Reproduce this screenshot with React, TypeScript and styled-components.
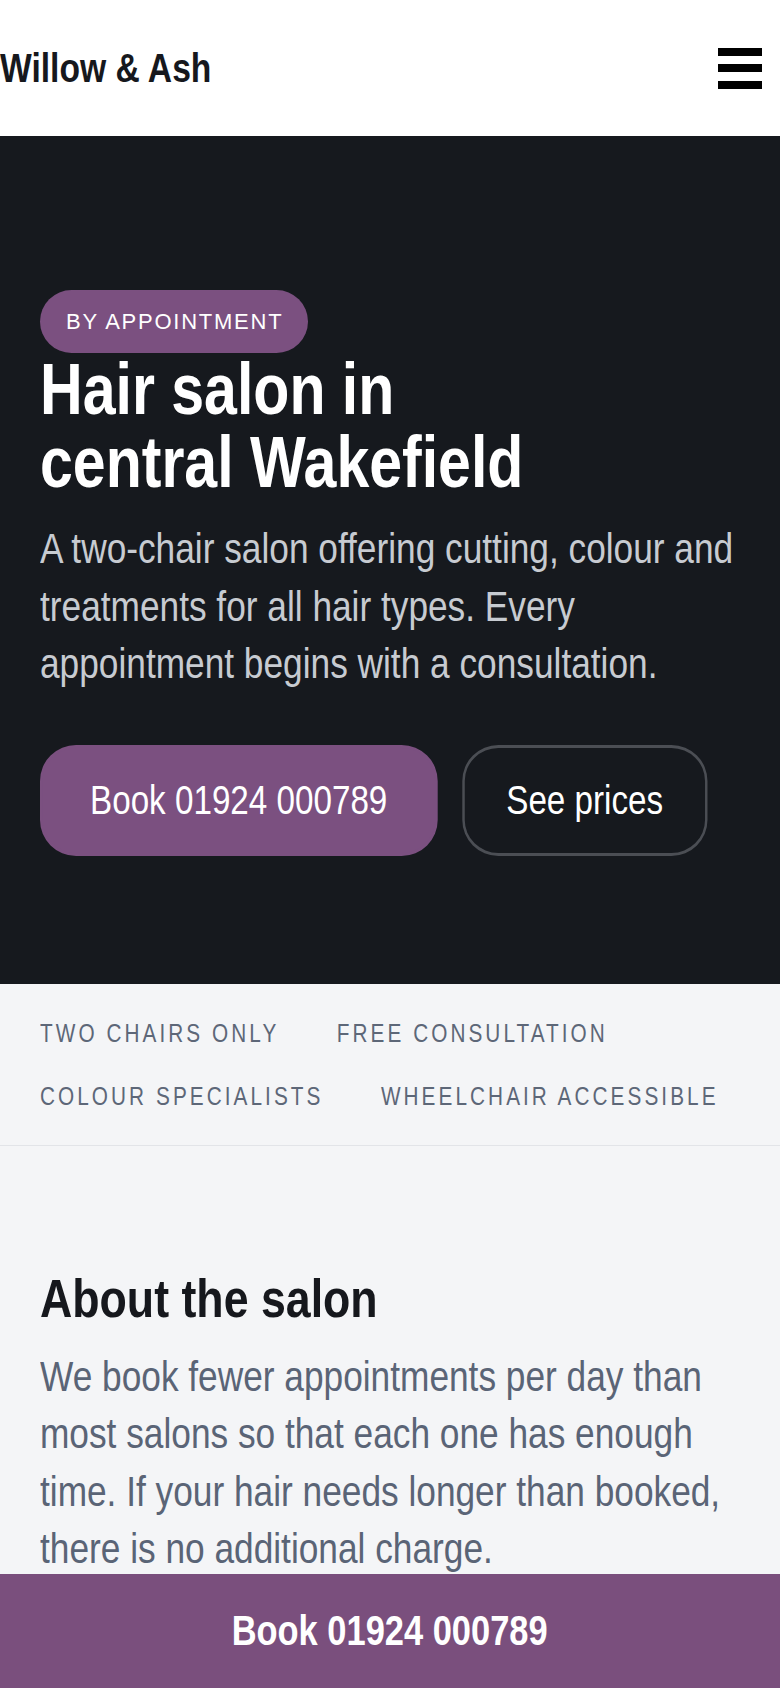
import styled, { createGlobalStyle, css } from "styled-components";

// The reference type is a condensed Arial-style face; we squeeze Liberation Sans
// horizontally and lay the text blocks out in the unsqueezed width.
const SQUEEZE = 0.82;

const condensed = css`
  width: calc(100% / ${SQUEEZE});
  transform: scaleX(${SQUEEZE});
  transform-origin: left top;
`;

const GlobalStyle = createGlobalStyle`
  * { box-sizing: border-box; }
  html, body { margin: 0; padding: 0; }
  body {
    font-family: "Liberation Sans", Arial, sans-serif;
    background: #f4f5f7;
    color: #16181d;
    overflow-x: hidden;
  }
`;

const Page = styled.div`
  min-height: 1688px;
  padding-bottom: 114px;
`;

const Header = styled.header`
  height: 136px;
  background: #ffffff;
  display: flex;
  align-items: center;
  justify-content: space-between;
  padding: 0 18px 0 0;
`;

const Logo = styled.a`
  display: inline-block;
  font-size: 41px;
  font-weight: 700;
  color: #16181d;
  text-decoration: none;
  transform: scaleX(${SQUEEZE});
  transform-origin: left center;
`;

const MenuButton = styled.button`
  width: 44px;
  height: 41px;
  padding: 0;
  border: 0;
  background: transparent;
  display: flex;
  flex-direction: column;
  justify-content: space-between;
  cursor: pointer;
`;

const MenuBar = styled.span`
  display: block;
  height: 8px;
  background: #000000;
`;

const Hero = styled.section`
  background: #16191e;
  padding: 154px 40px 128px;
`;

const HeroInner = styled.div`
  ${condensed}
`;

const Badge = styled.span`
  display: inline-block;
  background: #7b5080;
  color: #ffffff;
  font-size: 22px;
  line-height: 29px;
  letter-spacing: 0.08em;
  padding: 17px 25px 17px 26px;
  border-radius: 999px;
`;

const Title = styled.h1`
  margin: 0;
  font-size: 72px;
  line-height: 73px;
  font-weight: 700;
  color: #ffffff;
`;

const Lead = styled.p`
  margin: 21px 0 0;
  font-size: 43px;
  line-height: 57.5px;
  color: #c7cbd1;
`;

const Actions = styled.div`
  display: flex;
  gap: 30px;
  margin-top: 52px;
`;

const Button = styled.a<{ $variant?: "primary" | "outline" }>`
  display: inline-flex;
  align-items: center;
  justify-content: center;
  height: 111px;
  padding: 0 ${(p) => (p.$variant === "outline" ? "51px" : "58px")};
  border-radius: 44px / 36px;
  font-size: 40.5px;
  color: #ffffff;
  text-decoration: none;
  background: ${(p) => (p.$variant === "outline" ? "transparent" : "#7b5080")};
  border: 3px solid ${(p) => (p.$variant === "outline" ? "#4b4e54" : "#7b5080")};
`;

const FeaturesBand = styled.section`
  padding: 30px 40px;
  border-bottom: 1px solid #e2e4e8;
`;

const FeatureList = styled.ul`
  ${condensed}
  list-style: none;
  margin: 0;
  padding: 0;
  display: flex;
  flex-wrap: wrap;
  column-gap: 70px;
  row-gap: 25px;
`;

const Feature = styled.li`
  font-size: 25.3px;
  line-height: 38px;
  letter-spacing: 0.148em;
  text-transform: uppercase;
  color: #5d6778;
`;

const About = styled.section`
  padding: 120px 40px 40px;
`;

const AboutInner = styled.div`
  ${condensed}
`;

const SectionTitle = styled.h2`
  margin: 0;
  font-size: 54.5px;
  line-height: 65px;
  font-weight: 700;
  color: #16181d;
`;

const Body = styled.p`
  margin: 17px 0 0;
  font-size: 43px;
  line-height: 57.5px;
  color: #5a6476;
`;

const StickyBar = styled.a`
  position: fixed;
  left: 0;
  right: 0;
  bottom: 0;
  height: 114px;
  display: flex;
  align-items: center;
  justify-content: center;
  background: #7a4f7d;
  color: #ffffff;
  text-decoration: none;
`;

const StickyLabel = styled.span`
  display: inline-block;
  font-size: 42px;
  font-weight: 700;
  transform: scaleX(${SQUEEZE});
`;

const features = [
  "Two chairs only",
  "Free consultation",
  "Colour specialists",
  "Wheelchair accessible",
];

export default function App() {
  return (
    <>
      <GlobalStyle />
      <Page>
        <Header>
          <Logo href="#">Willow &amp; Ash</Logo>
          <MenuButton aria-label="Menu">
            <MenuBar />
            <MenuBar />
            <MenuBar />
          </MenuButton>
        </Header>

        <Hero>
          <Badge>BY APPOINTMENT</Badge>
          <HeroInner>
            <Title>
              Hair salon in
              <br />
              central Wakefield
            </Title>
            <Lead>
              A two-chair salon offering cutting, colour and treatments for all
              hair types. Every appointment begins with a consultation.
            </Lead>
            <Actions>
              <Button href="#">Book 01924 000789</Button>
              <Button href="#" $variant="outline">
                See prices
              </Button>
            </Actions>
          </HeroInner>
        </Hero>

        <FeaturesBand>
          <FeatureList>
            {features.map((f) => (
              <Feature key={f}>{f}</Feature>
            ))}
          </FeatureList>
        </FeaturesBand>

        <About>
          <AboutInner>
            <SectionTitle>About the salon</SectionTitle>
            <Body>
              We book fewer appointments per day than most salons so that each
              one has enough time. If your hair needs longer than booked, there
              is no additional charge.
            </Body>
          </AboutInner>
        </About>

        <StickyBar href="#">
          <StickyLabel>Book 01924 000789</StickyLabel>
        </StickyBar>
      </Page>
    </>
  );
}
